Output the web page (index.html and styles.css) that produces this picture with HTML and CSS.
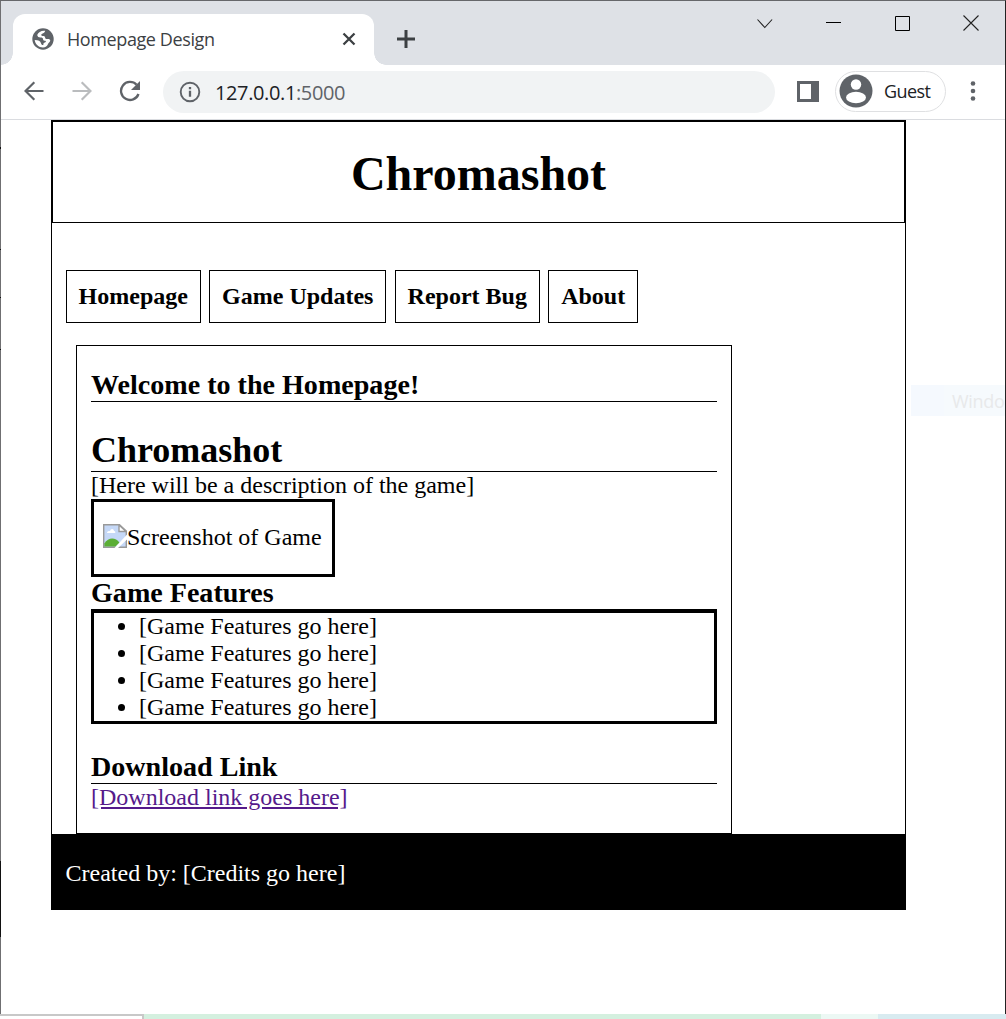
FILE: index.html
```html
<!DOCTYPE html>
<html lang="en">
<head>
<meta charset="utf-8">
<title>Homepage Design</title>
<link rel="stylesheet" href="styles.css">
</head>
<body>
<div class="window">
  <div class="tabstrip">
    <div class="tab">
      <svg class="globe" width="22" height="22" viewBox="0 0 22 22"><circle cx="11" cy="11" r="10.700" fill="#5f6368"/><path d="M13.200 2.800C9.500 2.200 6.500 4 5.200 7c.3 1.700 1.500 2.500 3.200 2.500 2 0 2.600.6 2.700 2 .1 1.200 1.300 1.100 2.200 1.300 1 .3.700 1.400-.3 1.600-1.300.3-1.800 1.100-1.600 2.500-1.500.2-2.200-.7-2.500-2-.4-1.800-2.400-2.800-6.200-2.900.5 4.300 4 7.500 8.300 7.500 2.400 0 4.300-1.400 4.900-3.300.5-1.600 2-2 2.300-3.400.3-1.300-1.100-1.900-2.700-1.800-1.500.1-2.200-.3-2.400-1.500-.2-1-1.100-1.500-2.400-1.400-1.600.1-2-1.700-.5-2.300 1.200-.4 2.800-1.600 3-3z" fill="#fff"/></svg>
      <span class="tab-title">Homepage Design</span>
      <svg class="tab-close" width="14" height="14" viewBox="0 0 14 14"><path d="M1.500 1.500l11 11M12.500 1.500l-11 11" stroke="#3c4043" stroke-width="2.300"/></svg>
    </div>
    <svg class="new-tab" width="18" height="18" viewBox="0 0 18 18"><path d="M9 0v18M0 9h18" stroke="#3c4043" stroke-width="3"/></svg>
    <div class="controls">
      <svg width="16" height="24" viewBox="0 0 16 24"><path d="M.5 8.500l7.300 8 7.300-8" fill="none" stroke="#222" stroke-width="1.100"/></svg>
      <svg width="15" height="24" viewBox="0 0 15 24"><path d="M0 11.500h15" stroke="#000"/></svg>
      <svg width="15" height="24" viewBox="0 0 15 24"><path d="M.5 5.500h14v14H.5z" fill="none" stroke="#000"/></svg>
      <svg width="16" height="24" viewBox="0 0 16 24"><path d="M.5 4.500l15 15M15.500 4.500l-15 15" stroke="#222" stroke-width="1.100"/></svg>
    </div>
  </div>
  <div class="toolbar">
    <svg class="back" width="20" height="20" viewBox="0 0 20 20"><path d="M19.500 10H1.800M10.300 1.200L1.500 10l8.800 8.800" fill="none" stroke="#5f6368" stroke-width="2.200"/></svg>
    <svg class="forward" width="20" height="20" viewBox="0 0 20 20"><path d="M.5 10h17.700M9.700 1.200l8.800 8.800-8.800 8.800" fill="none" stroke="#babcbe" stroke-width="2.200"/></svg>
    <svg class="reload" width="22" height="22" viewBox="0 0 22 22"><path d="M19.500 14a9 9 0 1 1-1.900-9.200" fill="none" stroke="#5f6368" stroke-width="2.300"/><path d="M21 1v9h-9z" fill="#5f6368"/></svg>
    <div class="address">
      <svg width="22" height="22" viewBox="0 0 22 22"><circle cx="11" cy="11" r="9.300" fill="none" stroke="#5f6368" stroke-width="1.900"/><path d="M11 9.800v6M11 6v2.200" stroke="#5f6368" stroke-width="2.300"/></svg>
      <span class="url">127.0.0.1<span class="port">:5000</span></span>
    </div>
    <svg class="panel" width="22" height="21" viewBox="0 0 22 21"><path fill-rule="evenodd" d="M0 0h22v21H0zM3 3v15h11V3z" fill="#5f6368"/></svg>
    <div class="profile">
      <svg width="34" height="34" viewBox="0 0 34 34"><circle cx="17" cy="17" r="16.500" fill="#5f6368"/><circle cx="17" cy="10.500" r="5.200" fill="#fff"/><ellipse cx="17" cy="23.500" rx="10" ry="5.700" fill="#fff"/></svg>
      <span class="guest">Guest</span>
    </div>
    <svg class="more" width="6" height="20" viewBox="0 0 6 20"><g fill="#5f6368"><circle cx="3" cy="2.500" r="2.300"/><circle cx="3" cy="10" r="2.300"/><circle cx="3" cy="17.500" r="2.300"/></g></svg>
  </div>
  <div class="viewport">
    <div class="page">
      <header class="banner"><h1>Chromashot</h1></header>
      <nav class="menu">
        <a>Homepage</a>
        <a>Game Updates</a>
        <a>Report Bug</a>
        <a>About</a>
      </nav>
      <main class="content">
        <h3>Welcome to the Homepage!</h3>
        <h2>Chromashot</h2>
        <p>[Here will be a description of the game]</p>
        <div class="shot">
          <svg width="24" height="24" viewBox="0 0 24 24"><path d="M.7.7h15.800l6.800 6.300v16.300H.7z" fill="#c5d8f7" stroke="#999" stroke-width="1.400"/><path d="M4 9c0-2 2-2.500 3-1.800C7.500 4 11 4.500 11 7c1.500 0 2 2 .5 2z" fill="#fff"/><path d="M1.400 22.600v-3.100c4-6.500 11-6.500 15.100-.8l-4 3.900z" fill="#5bae35"/><path d="M24 10.500L11.500 24H15l9-8.500z" fill="#fff"/><path d="M16 1v6.500h7z" fill="#fff" stroke="#999" stroke-width="1.400"/></svg>
          <span>Screenshot of Game</span>
        </div>
        <h3>Game Features</h3>
        <ul class="features">
          <li>[Game Features go here]</li>
          <li>[Game Features go here]</li>
          <li>[Game Features go here]</li>
          <li>[Game Features go here]</li>
        </ul>
        <h3 class="download">Download Link</h3>
        <p><a class="link">[Download link goes here]</a></p>
      </main>
      <footer class="credits">Created by: [Credits go here]</footer>
    </div>
  </div>
  <div class="ghost">Windo</div>
</div>
<div class="desktop-edge">
  <div class="edge-panel"></div>
  <div class="edge-green"></div>
  <div class="edge-pale"></div>
  <div class="edge-blue"></div>
</div>
</body>
</html>
```
FILE: styles.css
```css
* { box-sizing: border-box; }
body {
  margin: 0;
  height: 1019px;
  overflow: hidden;
  display: flex;
  flex-direction: column;
  background: #fff;
  color: #000;
}
svg { display: block; flex: none; }
h1, h2, h3, p, ul { margin: 0; }

.window {
  position: relative;
  height: 1014px;
  border-top: 1px solid #66676a;
  border-right: 1px solid #222;
  padding-left: 1px;
  background: linear-gradient(#6f6f71 0 146px, #111 146px 148px, #6f6f71 148px 248px, #111 248px 249px, #6f6f71 249px 296px, #111 296px 297px, #6f6f71 297px 348px, #111 348px 349px, #6f6f71 349px 860px, #111 860px 936px, #6f6f71 936px) 0 0 / 1px 100% no-repeat;
  font-family: "Open Sans", "Noto Sans", sans-serif;
}

.tabstrip {
  display: flex;
  height: 64px;
  padding: 13px 26px 0 12px;
  background: #dee1e6;
}
.tab {
  position: relative;
  display: flex;
  align-items: center;
  width: 361px;
  height: 51px;
  padding: 0 18px 2px 19px;
  border-radius: 12px 12px 0 0;
  background: #fff;
}
.tab::before, .tab::after {
  content: "";
  position: absolute;
  bottom: 0;
  width: 12px;
  height: 12px;
}
.tab::before { left: -12px; background: radial-gradient(circle at 0 0, transparent 11.5px, #fff 12px); }
.tab::after { right: -12px; background: radial-gradient(circle at 100% 0, transparent 11.5px, #fff 12px); }
.tab-title {
  margin-left: 13px;
  font-size: 18px;
  letter-spacing: -0.4px;
  color: #3c4043;
  white-space: nowrap;
}
.tab-close { margin-left: auto; }
.new-tab { margin: 16px 0 0 23px; }
.controls {
  display: flex;
  gap: 53.5px;
  margin: -3px 0 0 auto;
}

.toolbar {
  display: flex;
  align-items: center;
  height: 55px;
  padding: 0 0 2px 23px;
  border-bottom: 1px solid #dadce0;
  background: #fff;
}
.forward { margin-left: 28px; }
.reload { margin-left: 27px; }
.address {
  display: flex;
  align-items: center;
  width: 612px;
  height: 42px;
  margin: 1px 0 0 22px;
  padding-left: 16px;
  border-radius: 21px;
  background: #f1f3f4;
}
.url { margin: 1px 0 0 14px; font-size: 20px; letter-spacing: -0.38px; color: #202124; }
.port { color: #5f6368; }
.panel { margin-left: 22px; }
.profile {
  display: flex;
  align-items: center;
  width: 111px;
  height: 41px;
  margin-left: 16px;
  padding-left: 3px;
  border: 1px solid #dfe0e2;
  border-radius: 21px;
}
.guest { margin-left: 11px; font-size: 18px; letter-spacing: -0.6px; color: #202124; }
.more { margin-left: 24px; }

.viewport {
  height: 894px;
  padding-left: 50px;
  background: #fff;
  font: 24px/27px "Liberation Serif", "Times New Roman", serif;
}
.page { width: 855px; border: 1px solid #000; }
.banner {
  height: 102px;
  padding-top: 24px;
  border: 1px solid #000;
  text-align: center;
}
.banner h1 { font-size: 48px; line-height: 55px; }
.menu {
  display: flex;
  gap: 8.2px;
  padding: 47px 0 0 13.6px;
  font-weight: bold;
}
.menu a {
  height: 53px;
  padding: 12px;
  border: 1px solid #000;
}
.content {
  width: 656px;
  height: 489px;
  margin: 22px 0 0 24px;
  padding: 23px 14px 0;
  border: 1px solid #000;
}
h2, h3 { border-bottom: 1px solid #000; }
h2 { margin-top: 28px; padding-bottom: 1px; font-size: 36px; line-height: 40px; }
h3 { font-size: 28.08px; line-height: 32px; }
.shot {
  display: flex;
  align-items: flex-start;
  width: 244px;
  height: 78px;
  padding: 22px 0 0 9px;
  border: 3px solid #000;
  white-space: nowrap;
}
.features { padding-left: 45px; border: 3px solid #000; }
.download { margin-top: 27px; }
.link { color: #551a8b; text-decoration: underline; }
.credits {
  height: 75px;
  padding: 26px 13.5px 0;
  background: #000;
  color: #fff;
}

.ghost {
  position: absolute;
  top: 384px;
  right: 0;
  width: 94px;
  height: 31px;
  padding-left: 41px;
  overflow: hidden;
  background: linear-gradient(90deg, #f5f9fe 33px, #f6fafd 33px);
  color: #e8e9ea;
  font-size: 18px;
  letter-spacing: -0.3px;
  line-height: 32px;
}

.desktop-edge { display: flex; height: 5px; }
.edge-panel {
  width: 144px;
  border-top: 2px solid #c8c8c8;
  border-right: 2px solid #c8c8c8;
}
.edge-green { width: 677px; background: #d4f0df; }
.edge-pale { width: 57px; background: #ecf8f4; }
.edge-blue { flex: 1; background: #d8ebf0; }
```
